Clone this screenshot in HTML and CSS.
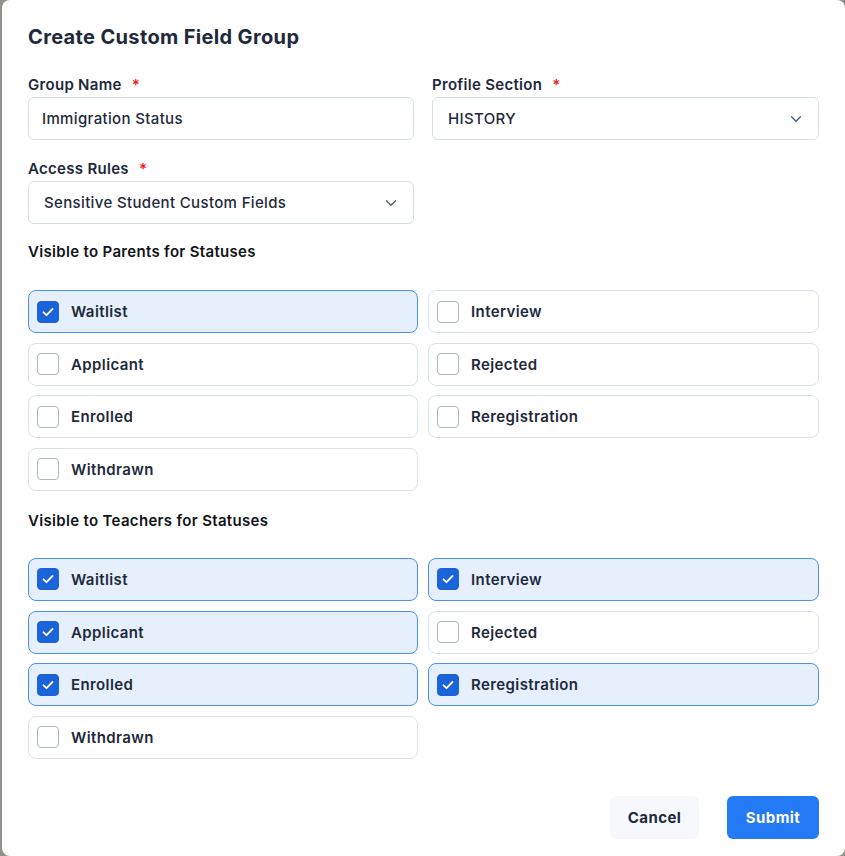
FILE: index.html
```html
<!DOCTYPE html>
<html lang="en">
<head>
<meta charset="utf-8">
<title>Create Custom Field Group</title>
<link rel="stylesheet" href="styles.css">
</head>
<body>
<div class="modal">
  <h1 class="title">Create Custom Field Group</h1>

  <div class="form-grid">
    <div class="field">
      <label class="label">Group Name <span class="req">*</span></label>
      <div class="input">Immigration Status</div>
    </div>
    <div class="field">
      <label class="label">Profile Section <span class="req">*</span></label>
      <div class="input select">HISTORY
        <svg class="chev" viewBox="0 0 12 8" width="12" height="8"><path d="M1.5 1.8 6 6.2l4.5-4.4" fill="none" stroke="#526075" stroke-width="1.4" stroke-linecap="round" stroke-linejoin="round"/></svg>
      </div>
    </div>
    <div class="field">
      <label class="label">Access Rules <span class="req">*</span></label>
      <div class="input select">Sensitive Student Custom Fields
        <svg class="chev" viewBox="0 0 12 8" width="12" height="8"><path d="M1.5 1.8 6 6.2l4.5-4.4" fill="none" stroke="#526075" stroke-width="1.4" stroke-linecap="round" stroke-linejoin="round"/></svg>
      </div>
    </div>
  </div>

  <h2 class="section">Visible to Parents for Statuses</h2>
  <div class="check-grid">
    <div class="card checked"><span class="box"><svg viewBox="0 0 22 22" width="22" height="22"><path d="M6.5 11.3l3 2.9 6-6.2" fill="none" stroke="#fff" stroke-width="1.8" stroke-linecap="round" stroke-linejoin="round"/></svg></span>Waitlist</div>
    <div class="card"><span class="box"></span>Interview</div>
    <div class="card"><span class="box"></span>Applicant</div>
    <div class="card"><span class="box"></span>Rejected</div>
    <div class="card"><span class="box"></span>Enrolled</div>
    <div class="card"><span class="box"></span>Reregistration</div>
    <div class="card"><span class="box"></span>Withdrawn</div>
  </div>

  <h2 class="section second">Visible to Teachers for Statuses</h2>
  <div class="check-grid">
    <div class="card checked"><span class="box"><svg viewBox="0 0 22 22" width="22" height="22"><path d="M6.5 11.3l3 2.9 6-6.2" fill="none" stroke="#fff" stroke-width="1.8" stroke-linecap="round" stroke-linejoin="round"/></svg></span>Waitlist</div>
    <div class="card checked"><span class="box"><svg viewBox="0 0 22 22" width="22" height="22"><path d="M6.5 11.3l3 2.9 6-6.2" fill="none" stroke="#fff" stroke-width="1.8" stroke-linecap="round" stroke-linejoin="round"/></svg></span>Interview</div>
    <div class="card checked"><span class="box"><svg viewBox="0 0 22 22" width="22" height="22"><path d="M6.5 11.3l3 2.9 6-6.2" fill="none" stroke="#fff" stroke-width="1.8" stroke-linecap="round" stroke-linejoin="round"/></svg></span>Applicant</div>
    <div class="card"><span class="box"></span>Rejected</div>
    <div class="card checked"><span class="box"><svg viewBox="0 0 22 22" width="22" height="22"><path d="M6.5 11.3l3 2.9 6-6.2" fill="none" stroke="#fff" stroke-width="1.8" stroke-linecap="round" stroke-linejoin="round"/></svg></span>Enrolled</div>
    <div class="card checked"><span class="box"><svg viewBox="0 0 22 22" width="22" height="22"><path d="M6.5 11.3l3 2.9 6-6.2" fill="none" stroke="#fff" stroke-width="1.8" stroke-linecap="round" stroke-linejoin="round"/></svg></span>Reregistration</div>
    <div class="card"><span class="box"></span>Withdrawn</div>
  </div>

  <div class="actions">
    <button class="btn cancel">Cancel</button>
    <button class="btn submit">Submit</button>
  </div>
</div>
</body>
</html>
```

FILE: styles.css
```css
* { box-sizing: border-box; }
html, body { margin: 0; padding: 0; }
body {
  background: #8f918a;
  font-family: Inter, "Noto Sans", "Liberation Sans", sans-serif;
  color: #1e293b;
  width: 845px;
  height: 856px;
  overflow: hidden;
}
.modal {
  margin-left: 2px;
  width: 843px;
  height: 856px;
  background: #fff;
  border-radius: 8px;
  padding: 25px 26px 0 26px;
}
.title {
  margin: 0;
  font-size: 20px;
  line-height: 24px;
  font-weight: 700;
  color: #1e293b;
  letter-spacing: 0.35px;
}
.form-grid {
  margin-top: 26px;
  display: grid;
  grid-template-columns: 386px 387px;
  column-gap: 18px;
  row-gap: 19px;
}
.field { display: flex; flex-direction: column; }
.label {
  font-size: 15px;
  line-height: 20px;
  font-weight: 600;
  color: #1e293b;
  margin-bottom: 2px;
  letter-spacing: 0.3px;
}
.req { color: #ef1d1d; margin-left: 6px; }
.input {
  height: 43px;
  border: 1px solid #d5dfeb;
  border-radius: 6px;
  padding: 0 13px;
  display: flex;
  align-items: center;
  font-size: 15px;
  font-weight: 500;
  color: #1e293b;
  letter-spacing: 0.35px;
}
.select { padding: 0 16px 0 15px; justify-content: space-between; }
.chev { flex: none; }
.section {
  margin: 18px 0 0;
  font-size: 15px;
  line-height: 20px;
  font-weight: 600;
  color: #111418;
  letter-spacing: 0.32px;
}
.section.second { margin-top: 20px; }
.check-grid {
  margin-top: 28px;
  display: grid;
  grid-template-columns: 390px 391px;
  column-gap: 10px;
  row-gap: 9.67px;
}
.section.second + .check-grid { margin-top: 27px; }
.card {
  height: 43px;
  border: 1px solid #d9e2ee;
  border-radius: 8px;
  display: flex;
  align-items: center;
  padding-left: 8px;
  font-size: 15px;
  font-weight: 600;
  color: #1e293b;
  letter-spacing: 0.4px;
}
.card.checked {
  background: #e6f0fd;
  border-color: #4a90f0;
}
.box {
  flex: none;
  width: 22px;
  height: 22px;
  border: 1px solid #a9b4c7;
  border-radius: 4px;
  margin-right: 12px;
  background: #fff;
  display: flex;
  align-items: center;
  justify-content: center;
}
.checked .box {
  background: #1b63d9;
  border-color: #1b63d9;
}
.box svg { display: block; flex: none; }
.actions {
  margin-top: 37px;
  display: flex;
  justify-content: flex-end;
  gap: 28px;
}
.btn {
  height: 43px;
  border: none;
  border-radius: 6px;
  font-family: inherit;
  font-size: 15px;
  font-weight: 700;
  letter-spacing: 0.4px;
  cursor: pointer;
}
.cancel { width: 89px; background: #f6f8fc; color: #1e293b; }
.submit { width: 92px; background: #2479f5; color: #fff; }
```
